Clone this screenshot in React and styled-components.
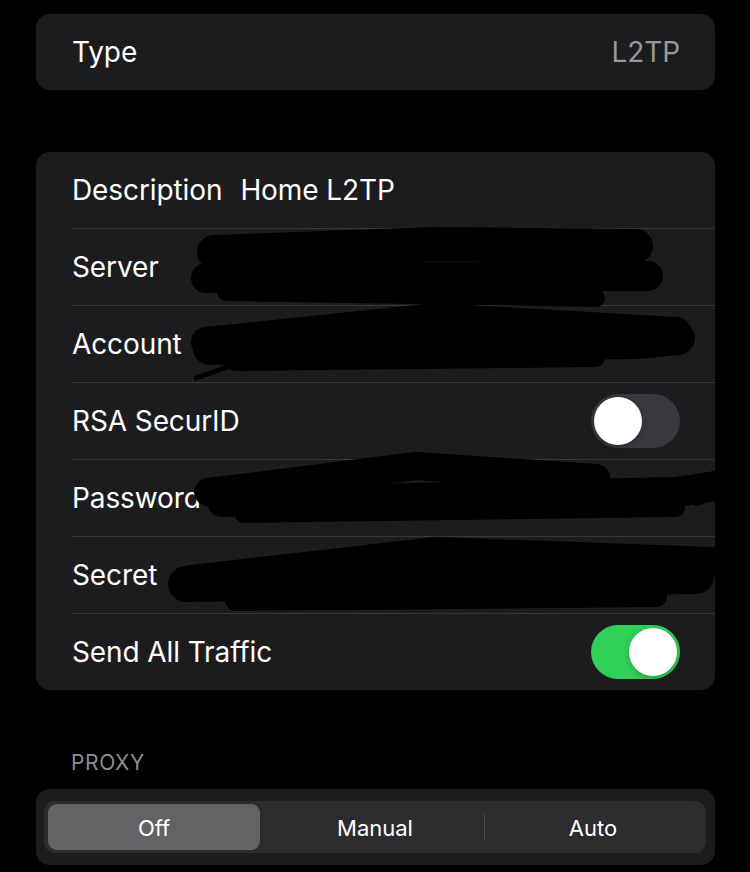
import React from "react";
import styled, { createGlobalStyle } from "styled-components";

const GlobalStyle = createGlobalStyle`
  html, body {
    margin: 0;
    padding: 0;
    background: #000;
  }
  body {
    font-family: Inter, "Noto Sans", "Liberation Sans", sans-serif;
    color: #fff;
    -webkit-font-smoothing: antialiased;
  }
`;

const rows = [
  { label: "Description", value: "Home L2TP" },
  { label: "Server" },
  { label: "Account" },
  { label: "RSA SecurID", toggle: false },
  { label: "Password" },
  { label: "Secret" },
  { label: "Send All Traffic", toggle: true },
];

const segments = ["Off", "Manual", "Auto"];

// scribbles drawn over the private values, in card coordinates
const scribbles = [
  // server
  { d: "M178 100 L400 92 L600 94", w: 34 },
  { d: "M170 126 L612 124", w: 30 },
  { d: "M190 140 L560 146", w: 18 },
  { d: "M186 108 L170 96", w: 6 },
  // account
  { d: "M170 190 L400 166 L640 180", w: 30 },
  { d: "M174 196 L600 190 L642 186", w: 34 },
  { d: "M200 210 L560 206", w: 18 },
  { d: "M200 212 L160 226", w: 5 },
  // password
  { d: "M172 340 L380 314 L560 326", w: 28 },
  { d: "M186 350 L640 340 L679 334", w: 30 },
  { d: "M208 362 L640 356", w: 18 },
  { d: "M640 344 C 670 336, 684 346, 660 352", w: 4 },
  // secret
  { d: "M156 428 L400 400 L679 410", w: 30 },
  { d: "M150 432 L660 424", w: 36 },
  { d: "M200 448 L620 444", w: 22 },
];

export default function App() {
  return (
    <>
      <GlobalStyle />
      <Page>
        <Card>
          <Row>
            <Label>Type</Label>
            <Detail>L2TP</Detail>
          </Row>
        </Card>

        <Card $spaced>
          {rows.map((row, i) => (
            <Row key={row.label} $divider={i > 0}>
              <Label>{row.label}</Label>
              {row.value && <Value>{row.value}</Value>}
              {row.toggle !== undefined && <Toggle $on={row.toggle} />}
            </Row>
          ))}
          <Redaction viewBox="0 0 679 538" preserveAspectRatio="none">
            {scribbles.map((s, i) => (
              <path
                key={i}
                d={s.d}
                stroke="#000"
                strokeWidth={s.w}
                strokeLinecap="round"
                strokeLinejoin="round"
                fill="none"
              />
            ))}
          </Redaction>
        </Card>

        <SectionHeader>PROXY</SectionHeader>
        <Card>
          <Segmented>
            {segments.map((seg, i) => (
              <Segment key={seg} $active={i === 0} $divider={i === 2}>
                {seg}
              </Segment>
            ))}
          </Segmented>
        </Card>
      </Page>
    </>
  );
}

const Page = styled.div`
  display: flex;
  flex-direction: column;
  padding: 14px 35px 0 36px;
`;

const Card = styled.div`
  position: relative;
  background: #1c1c1e;
  border-radius: 14px;
  overflow: hidden;
  margin-top: ${(p) => (p.$spaced ? "62px" : "0")};
`;

const Row = styled.div`
  display: flex;
  align-items: center;
  height: 76px;
  margin-left: 36px;
  padding-right: 35px;
  border-top: ${(p) => (p.$divider ? "1px solid #38383a" : "none")};
`;

const Label = styled.div`
  font-size: 28px;
  letter-spacing: -0.1px;
  color: #fff;
  white-space: nowrap;
`;

const Detail = styled.div`
  margin-left: auto;
  font-size: 28px;
  letter-spacing: -0.1px;
  color: #98989d;
`;

const Value = styled.div`
  margin-left: 18px;
  font-size: 28px;
  letter-spacing: -0.1px;
  color: #fff;
`;

const Toggle = styled.div`
  margin-left: auto;
  position: relative;
  width: 89px;
  height: 54px;
  border-radius: 27px;
  background: ${(p) => (p.$on ? "#30d158" : "#39393d")};
  flex-shrink: 0;

  &::after {
    content: "";
    position: absolute;
    top: 3px;
    left: ${(p) => (p.$on ? "38px" : "3px")};
    width: 48px;
    height: 48px;
    border-radius: 50%;
    background: #fff;
    box-shadow: 0 2px 6px rgba(0, 0, 0, 0.25);
  }
`;

const Redaction = styled.svg`
  position: absolute;
  left: 0;
  top: 0;
  width: 100%;
  height: 100%;
  pointer-events: none;
`;

const SectionHeader = styled.div`
  margin: 60px 0 14px 35px;
  font-size: 21px;
  color: #8d8d92;
  letter-spacing: 0.6px;
`;

const Segmented = styled.div`
  display: grid;
  grid-template-columns: repeat(3, 1fr);
  margin: 12px 9px 12px 8px;
  height: 52px;
  padding: 3px 4px;
  box-sizing: border-box;
  border-radius: 11px;
  background: #2c2c2e;
`;

const Segment = styled.div`
  position: relative;
  display: flex;
  align-items: center;
  justify-content: center;
  margin-right: ${(p) => (p.$active ? "6px" : "0")};
  padding-top: 1px;
  border-radius: 9px;
  font-size: 22px;
  font-weight: 400;
  color: #fff;
  background: ${(p) => (p.$active ? "#636366" : "transparent")};

  &::before {
    content: "";
    display: ${(p) => (p.$divider ? "block" : "none")};
    position: absolute;
    left: 0;
    top: 10px;
    bottom: 10px;
    width: 1px;
    background: #48484a;
  }
`;
